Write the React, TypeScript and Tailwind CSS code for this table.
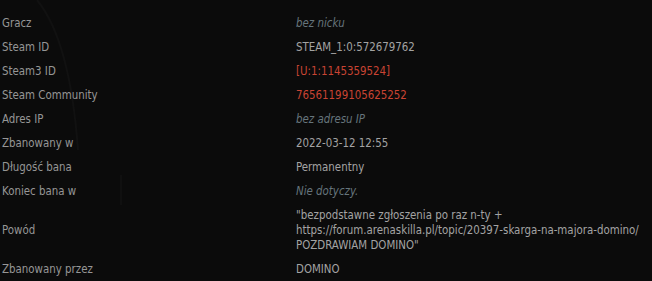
import React from 'react';

type Row = {
  label: string;
  value: React.ReactNode;
  tone?: 'plain' | 'red' | 'muted';
};

const rows: Row[] = [
  { label: 'Gracz', value: 'bez nicku', tone: 'muted' },
  { label: 'Steam ID', value: 'STEAM_1:0:572679762' },
  { label: 'Steam3 ID', value: '[U:1:1145359524]', tone: 'red' },
  { label: 'Steam Community', value: '76561199105625252', tone: 'red' },
  { label: 'Adres IP', value: 'bez adresu IP', tone: 'muted' },
  { label: 'Zbanowany w', value: '2022-03-12 12:55' },
  { label: 'Długość bana', value: 'Permanentny' },
  { label: 'Koniec bana w', value: 'Nie dotyczy.', tone: 'muted' },
  {
    label: 'Powód',
    value: (
      <>
        "bezpodstawne zgłoszenia po raz n-ty +
        <br />
        https://forum.arenaskilla.pl/topic/20397-skarga-na-majora-domino/
        <br />
        POZDRAWIAM DOMINO"
      </>
    ),
  },
  { label: 'Zbanowany przez', value: 'DOMINO' },
];

const toneClass = {
  plain: 'text-[#a3a3a3]',
  red: 'text-[#c94433]',
  muted: 'italic text-[#66757c]',
};

export default function App() {
  return (
    <div
      className="relative h-[281px] w-[652px] overflow-hidden bg-[#0b0b0b] text-[11.4px] leading-[15px]"
      style={{ fontFamily: '"DejaVu Sans Condensed", "DejaVu Sans", Verdana, sans-serif' }}
    >
      {/* faint background ornament */}
      <svg className="absolute left-0 top-0" width="260" height="281" aria-hidden>
        <path d="M37 0 Q70 40 78 150" fill="none" stroke="#111111" strokeWidth="2" />
        <path d="M121 175 L121 205" fill="none" stroke="#101010" strokeWidth="2" />
      </svg>
      <div className="relative flex flex-col pt-[11px]">
        {rows.map((r) => (
          <div key={r.label} className="flex items-center py-[4.5px]">
            <div className="w-[296px] shrink-0 pl-[2px] text-[#969696]">{r.label}</div>
            <div className={toneClass[r.tone ?? 'plain']}>{r.value}</div>
          </div>
        ))}
      </div>
    </div>
  );
}
